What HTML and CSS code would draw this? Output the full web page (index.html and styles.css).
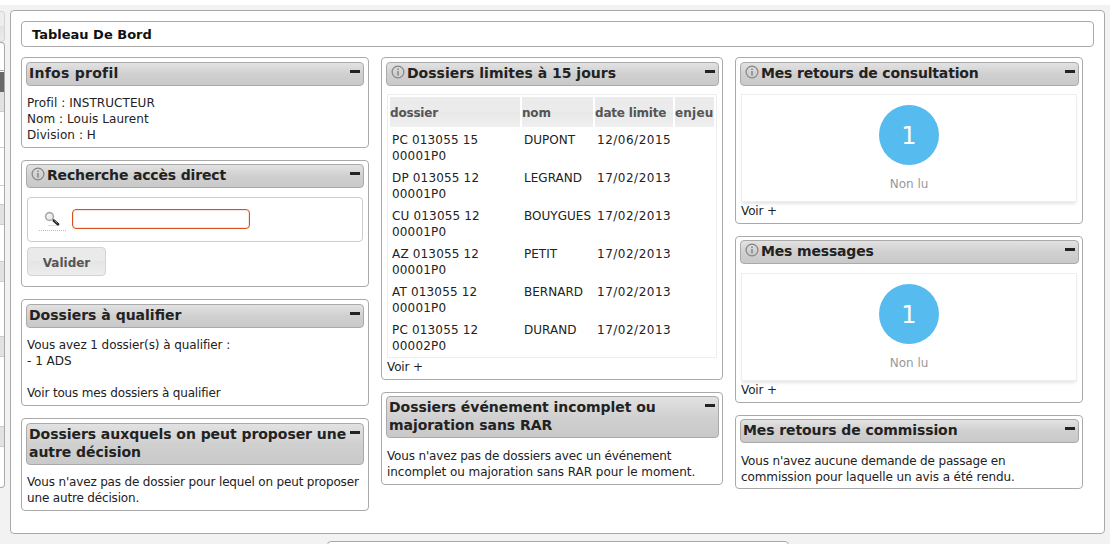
FILE: index.html
```html
<!DOCTYPE html>
<html lang="fr">
<head>
<meta charset="utf-8">
<title>Tableau De Bord</title>
<link rel="stylesheet" href="styles.css">
</head>
<body>
<svg class="defs" width="0" height="0">
  <symbol id="info" viewBox="0 0 14 14"><circle cx="7" cy="7" r="5.9" fill="none" stroke="#858585" stroke-width="1.2"/><path d="M7 6v4.5M7 3.4v1.5" stroke="#858585" stroke-width="1.5"/></symbol>
</svg>
<div class="page">
  <aside class="side">
    <div class="side-button"></div>
    <div class="side-menu">
      <i class="row first"></i><i class="row dark"></i><i class="row shade"></i>
      <i class="row r1"></i><i class="row r2"></i><i class="row r3"></i><i class="row shade"></i>
      <i class="row r4"></i><i class="row shade"></i><i class="row r5"></i><i class="row shade"></i>
      <i class="row r6"></i><i class="row shade"></i>
    </div>
  </aside>
  <main class="content">
    <h1 class="title">Tableau De Bord</h1>
    <div class="columns">
      <div class="column">
        <section class="widget">
          <h2 class="head"><span class="wide">Infos profil</span><b class="minus"></b></h2>
          <div class="text loose">Profil : INSTRUCTEUR<br>Nom : Louis Laurent<br>Division : H</div>
        </section>
        <section class="widget tight search">
          <h2 class="head"><svg class="info"><use href="#info"/></svg><span class="narrow">Recherche accès direct</span><b class="minus"></b></h2>
          <div class="field">
            <span class="lens"><svg width="16" height="16" viewBox="0 0 16 16"><path d="M4 14.5h9" stroke="#ddd"/><circle cx="5.5" cy="5.5" r="3.9" fill="#eee" stroke="#aaa" stroke-width="1.6"/><path d="M3.5 5.5a2 2 0 0 1 2-2" fill="none" stroke="#fff"/><path d="M8.5 8.3l2 1.7" stroke="#888" stroke-width="1.5"/><path d="M10 9.8l4 3.4" stroke="#222" stroke-width="2.8" stroke-linecap="round"/><path d="M10.4 9.6l3 2.6" stroke="#aaa" stroke-width=".8"/></svg></span>
            <input class="input" type="text">
          </div>
          <button class="button">Valider</button>
        </section>
        <section class="widget">
          <h2 class="head"><span>Dossiers à qualifier</span><b class="minus"></b></h2>
          <div class="text"><span class="slim">Vous avez 1 dossier(s) à qualifier :</span><br>- 1 ADS<br><br><span class="narrow">Voir tous mes dossiers à qualifier</span></div>
        </section>
        <section class="widget">
          <h2 class="head"><span class="slight">Dossiers auxquels on peut proposer une<br>autre décision</span><b class="minus"></b></h2>
          <div class="text narrow">Vous n'avez pas de dossier pour lequel on peut proposer<br>une autre décision.</div>
        </section>
      </div>
      <div class="column middle">
        <section class="widget">
          <h2 class="head"><svg class="info"><use href="#info"/></svg><span>Dossiers limites à 15 jours</span><b class="minus"></b></h2>
          <table class="table">
            <colgroup><col class="c1"><col class="c2"><col class="c3"><col class="c4"></colgroup>
            <thead><tr><th>dossier</th><th>nom</th><th>date limite</th><th>enjeu</th></tr></thead>
            <tbody>
              <tr><td>PC 013055 15<br>00001P0</td><td>DUPONT</td><td>12/06/2015</td><td></td></tr>
              <tr><td>DP 013055 12<br>00001P0</td><td>LEGRAND</td><td>17/02/2013</td><td></td></tr>
              <tr><td>CU 013055 12<br>00001P0</td><td>BOUYGUES</td><td>17/02/2013</td><td></td></tr>
              <tr><td>AZ 013055 12<br>00001P0</td><td>PETIT</td><td>17/02/2013</td><td></td></tr>
              <tr><td>AT 013055 12<br>00001P0</td><td>BERNARD</td><td>17/02/2013</td><td></td></tr>
              <tr><td>PC 013055 12<br>00002P0</td><td>DURAND</td><td>17/02/2013</td><td></td></tr>
            </tbody>
          </table>
          <div class="more">Voir +</div>
        </section>
        <section class="widget tight">
          <h2 class="head"><span class="slight">Dossiers événement incomplet ou<br>majoration sans RAR</span><b class="minus"></b></h2>
          <div class="text"><span class="narrow">Vous n'avez pas de dossiers avec un événement</span><br><span class="slight">incomplet ou majoration sans RAR pour le moment.</span></div>
        </section>
      </div>
      <div class="column">
        <section class="widget">
          <h2 class="head"><svg class="info"><use href="#info"/></svg><span class="narrow">Mes retours de consultation</span><b class="minus"></b></h2>
          <div class="counter"><div class="bubble">1</div><div class="label">Non lu</div></div>
          <div class="more">Voir +</div>
        </section>
        <section class="widget tight">
          <h2 class="head"><svg class="info"><use href="#info"/></svg><span class="narrow">Mes messages</span><b class="minus"></b></h2>
          <div class="counter"><div class="bubble">1</div><div class="label">Non lu</div></div>
          <div class="more">Voir +</div>
        </section>
        <section class="widget tight last">
          <h2 class="head"><span class="slim">Mes retours de commission</span><b class="minus"></b></h2>
          <div class="text"><span class="narrow">Vous n'avez aucune demande de passage en</span><br><span class="slim">commission pour laquelle un avis a été rendu.</span></div>
        </section>
      </div>
    </div>
  </main>
  <footer class="footer"></footer>
</div>
</body>
</html>
```
FILE: styles.css
```css
* { box-sizing: border-box; }
body { margin: 0; background: #fff; color: #222; font: 12px/16px "DejaVu Sans", sans-serif; overflow: hidden; }
.defs { display: block; }
.page { width: 1110px; height: 544px; border-top: 5px solid #fff; background: #f2f2f2; display: grid; grid-template-columns: 5px 1095px; grid-template-rows: 529px 5px; column-gap: 5px; row-gap: 7px; overflow: hidden; }
.side { padding-top: 6px; }
.side-button { height: 31px; border: 1px solid #d3d3d3; border-left: 0; border-radius: 0 4px 4px 0; background: linear-gradient(#ededed 50%, #e2e2e2 50%, #ececec); }
.side-menu { height: 446px; border: 1px solid #aaa; border-left: 0; border-radius: 0 4px 4px 0; background: #fff; overflow: hidden; }
.row { display: block; border-bottom: 1px solid #ccc; }
.first { height: 28px; border-bottom-color: #aaa; }
.dark { height: 21px; background: #686868; border-top: 1px solid #fff; border-bottom: 0; }
.shade { height: 20px; background: #e2e2e2; }
.r1 { height: 36px; }
.r2 { height: 38px; }
.r3 { height: 19px; }
.r4 { height: 37px; }
.r5 { height: 55px; }
.r6 { height: 70px; }
.content { margin-top: 5px; height: 524px; background: #fff; border: 1px solid #aaa; border-radius: 4px; padding: 10px; }
.title { margin: 0; height: 26px; width: 1073px; border: 1px solid #aaa; border-radius: 4px; padding: 0 10px; font-size: 13px; line-height: 25px; color: #111; }
.columns { display: flex; gap: 12px; align-items: flex-start; margin-top: 10px; }
.column { width: 348px; display: flex; flex-direction: column; gap: 12px; }
.middle { width: 342px; }
.widget { border: 1px solid #aaa; border-radius: 4px; padding: 4px; }
.tight { padding-top: 3px; }
.last { padding-bottom: 3px; }
.wide { letter-spacing: .27px; }
.loose { letter-spacing: .06px; }
.slight { letter-spacing: -.05px; }
.slim { letter-spacing: -.09px; }
.narrow { letter-spacing: -.165px; }
.head { margin: 0; min-height: 24px; border: 1px solid #aaa; border-radius: 4px; background: linear-gradient(#e2e2e2 0%, #d0d0d0 50%, #c9c9c9 100%); padding: 1px 3px 3px 2px; font-size: 14px; line-height: 18px; display: flex; justify-content: space-between; white-space: nowrap; }
.column + .column .head { margin-right: -1px; }
.head span { flex: 1; }
.minus { width: 10px; height: 3px; background: #222; margin-top: 6px; flex: none; }
.info { width: 14px; height: 14px; margin: 1px 2px 0 2px; flex: none; }
.text { margin: 9px 0 0 1px; white-space: nowrap; }
.tight .text { margin-top: 10px; }
.search { height: 127px; }
.field { margin: 9px 0 0 1px; width: 336px; height: 45px; border: 1px solid #ccc; border-radius: 4px; padding: 11px; display: flex; gap: 6px; }
.lens { width: 27px; height: 22px; border-bottom: 1px dotted #bbb; padding: 2px 0 0 5px; }
.lens svg { display: block; }
.input { width: 178px; height: 20px; border: 1px solid #d95020; border-radius: 4px; background: #fff; box-shadow: inset 0 0 1px 1px #fbe3d8; padding: 0 3px; outline: 0; }
.button { display: block; margin: 5px 0 0 1px; width: 79px; height: 29px; border: 1px solid #d3d3d3; border-radius: 4px; background: linear-gradient(#eaeaea 50%, #e5e5e5 50%, #ededed); color: #555; font: bold 12px/16px "DejaVu Sans", sans-serif; padding: 2px 0 0; }
.table { width: 330px; height: 264px; margin: 8px 0 0 1px; border: 1px solid #eee; border-spacing: 2px; border-collapse: separate; table-layout: fixed; }
.c1 { width: 130px; }
.c2 { width: 71px; }
.c3 { width: 78px; }
.c4 { width: 39px; }
th { height: 30px; padding: 2px 0 0; text-align: left; color: #555; background: linear-gradient(#ebebeb 50%, #e8e8e8 50%, #f0f0f0); white-space: nowrap; letter-spacing: -.2px; }
th:last-child { letter-spacing: .2px; }
td { height: 36px; padding: 3px 2px 1px; vertical-align: top; white-space: nowrap; }
td:first-child { letter-spacing: .17px; }
td:nth-child(2) { letter-spacing: .02px; }
td:nth-child(3) { letter-spacing: .5px; }
.more { margin: 1px 0 0 1px; letter-spacing: -.15px; }
.counter { margin: 8px 0 0 1px; width: 336px; height: 108px; border: 1px solid #eee; box-shadow: 0 3px 3px -1px #e6e6e6; display: flex; flex-direction: column; align-items: center; padding-top: 10px; }
.tight .counter { margin-top: 9px; }
.bubble { width: 60px; height: 60px; border-radius: 50%; background: #56bbef; color: #fff; font-size: 24px; line-height: 62px; text-align: center; }
.label { color: #999; margin-top: 11px; }
.footer { grid-column: 2; margin-left: 317px; width: 462px; height: 10px; border: 1px solid #aaa; border-radius: 4px; background: #fff; }
```
